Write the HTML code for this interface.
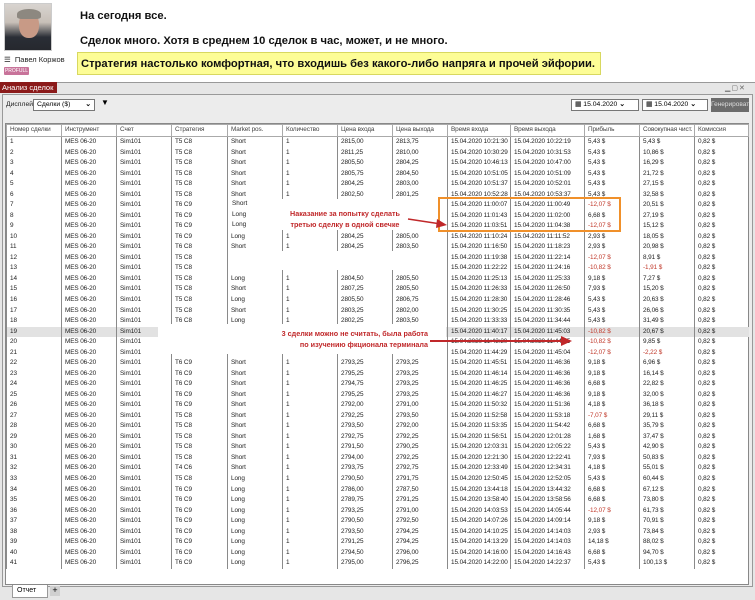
<!DOCTYPE html>
<html><head><meta charset="utf-8"><style>
*{margin:0;padding:0;box-sizing:border-box}
body{width:755px;height:600px;background:#fff;position:relative;overflow:hidden;font-family:"Liberation Sans",sans-serif}
.a{position:absolute}
.h{font-weight:bold;font-size:11.2px;color:#111;white-space:nowrap}
table{border-collapse:collapse;table-layout:fixed;position:absolute;left:6px;top:124px;width:742px;font-size:6.4px;letter-spacing:-0.1px;color:#222}
td{height:10.53px;line-height:10.53px;padding-left:3px;border-left:1px solid #8a8a8a;white-space:nowrap;overflow:hidden}
thead td{height:12px;border:1px solid #aaa;color:#444;background:#fff}
tr.g td{background:#e2e2e2}
.r{color:#c0392b}
</style></head><body>
<div class="a" style="left:4px;top:3px;width:48px;height:48px;border:1px solid #ccc;background:linear-gradient(#d8d4d0 0,#c8c0b8 40%,#2a2e36 72%,#26282e 100%)"><div class="a" style="left:14px;top:8px;width:20px;height:26px;border-radius:45%;background:#c89a86"></div><div class="a" style="left:12px;top:5px;width:24px;height:10px;border-radius:50% 50% 20% 20%;background:#8d8880"></div></div>
<div class="a" style="left:4px;top:55px;font-size:7.5px;color:#222;white-space:nowrap">&#9776;&nbsp; Павел Коржов</div>
<div class="a" style="left:4px;top:67px;width:25px;height:8px;background:#c8739a;color:#fff;font-size:5px;line-height:8px;text-align:center;border-radius:1px">PROFULL</div>
<div class="a h" style="left:80px;top:10px">На сегодня все.</div>
<div class="a h" style="left:80px;top:35px">Сделок много. Хотя в среднем 10 сделок в час, может, и не много.</div>
<div class="a" style="left:77px;top:52px;width:524px;height:23px;background:#fdfd96;border:1px solid #d8d860"></div>
<div class="a h" style="left:81px;top:58px">Стратегия настолько комфортная, что входишь без какого-либо напряга и прочей эйфории.</div>
<div class="a" style="left:0;top:82px;width:755px;height:518px;background:#e6e6e6;border-top:1px solid #999"></div>
<div class="a" style="left:0;top:82px;width:57px;height:11px;background:#8b1a1a;color:#fff;font-size:7.5px;line-height:11px;padding-left:2px">Анализ сделок</div>
<div class="a" style="left:725px;top:84px;font-size:7px;color:#666;letter-spacing:1px">▁▢✕</div>
<div class="a" style="left:2px;top:94px;width:751px;height:493px;border:1px solid #999;background:#ececec"></div>
<div class="a" style="left:6px;top:101px;font-size:6.8px;color:#222">Дисплей</div>
<div class="a" style="left:33px;top:99px;width:62px;height:12px;border:1px solid #777;background:#fff;font-size:6.8px;line-height:10px;padding-left:3px">Сделки ($)<span style="float:right;padding-right:3px;font-weight:bold">⌄</span></div>
<div class="a" style="left:101px;top:98px;font-size:8px">▼</div>
<div class="a" style="left:571px;top:99px;width:68px;height:12px;border:1px solid #777;background:#fff;font-size:6.8px;line-height:10px;padding-left:3px">▦ 15.04.2020 <b>⌄</b></div>
<div class="a" style="left:642px;top:99px;width:66px;height:12px;border:1px solid #777;background:#fff;font-size:6.8px;line-height:10px;padding-left:3px">▦ 15.04.2020 <b>⌄</b></div>
<div class="a" style="left:711px;top:98px;width:38px;height:14px;background:#6c6c6c;color:#ddd;font-size:6.5px;line-height:14px;text-align:center;white-space:nowrap;overflow:hidden">Генерировать</div>
<div class="a" style="left:5px;top:123px;width:744px;height:462px;background:#fff;border:1px solid #888"></div>
<table>
<colgroup><col style="width:55px"><col style="width:55px"><col style="width:55px"><col style="width:56px"><col style="width:55px"><col style="width:55px"><col style="width:55px"><col style="width:55px"><col style="width:63px"><col style="width:74px"><col style="width:55px"><col style="width:55px"><col style="width:54px"></colgroup>
<thead><tr><td>Номер сделки</td><td>Инструмент</td><td>Счет</td><td>Стратегия</td><td>Market pos.</td><td>Количество</td><td>Цена входа</td><td>Цена выхода</td><td>Время входа</td><td>Время выхода</td><td>Прибыль</td><td>Совокупная чист.</td><td>Комиссия</td></tr></thead>
<tbody>
<tr><td>1</td><td>MES 06-20</td><td>Sim101</td><td>T5 C8</td><td>Short</td><td>1</td><td>2815,00</td><td>2813,75</td><td>15.04.2020 10:21:30</td><td>15.04.2020 10:22:19</td><td>5,43 $</td><td>5,43 $</td><td>0,82 $</td></tr>
<tr><td>2</td><td>MES 06-20</td><td>Sim101</td><td>T5 C8</td><td>Short</td><td>1</td><td>2811,25</td><td>2810,00</td><td>15.04.2020 10:30:29</td><td>15.04.2020 10:31:53</td><td>5,43 $</td><td>10,86 $</td><td>0,82 $</td></tr>
<tr><td>3</td><td>MES 06-20</td><td>Sim101</td><td>T5 C8</td><td>Short</td><td>1</td><td>2805,50</td><td>2804,25</td><td>15.04.2020 10:46:13</td><td>15.04.2020 10:47:00</td><td>5,43 $</td><td>16,29 $</td><td>0,82 $</td></tr>
<tr><td>4</td><td>MES 06-20</td><td>Sim101</td><td>T5 C8</td><td>Short</td><td>1</td><td>2805,75</td><td>2804,50</td><td>15.04.2020 10:51:05</td><td>15.04.2020 10:51:09</td><td>5,43 $</td><td>21,72 $</td><td>0,82 $</td></tr>
<tr><td>5</td><td>MES 06-20</td><td>Sim101</td><td>T5 C8</td><td>Short</td><td>1</td><td>2804,25</td><td>2803,00</td><td>15.04.2020 10:51:37</td><td>15.04.2020 10:52:01</td><td>5,43 $</td><td>27,15 $</td><td>0,82 $</td></tr>
<tr><td>6</td><td>MES 06-20</td><td>Sim101</td><td>T5 C8</td><td>Short</td><td>1</td><td>2802,50</td><td>2801,25</td><td>15.04.2020 10:52:28</td><td>15.04.2020 10:53:37</td><td>5,43 $</td><td>32,58 $</td><td>0,82 $</td></tr>
<tr><td>7</td><td>MES 06-20</td><td>Sim101</td><td>T6 C9</td><td>Short</td><td></td><td></td><td></td><td>15.04.2020 11:00:07</td><td>15.04.2020 11:00:49</td><td class="r">-12,07 $</td><td>20,51 $</td><td>0,82 $</td></tr>
<tr><td>8</td><td>MES 06-20</td><td>Sim101</td><td>T6 C9</td><td>Long</td><td></td><td></td><td></td><td>15.04.2020 11:01:43</td><td>15.04.2020 11:02:00</td><td>6,68 $</td><td>27,19 $</td><td>0,82 $</td></tr>
<tr><td>9</td><td>MES 06-20</td><td>Sim101</td><td>T6 C9</td><td>Long</td><td></td><td></td><td></td><td>15.04.2020 11:03:51</td><td>15.04.2020 11:04:38</td><td class="r">-12,07 $</td><td>15,12 $</td><td>0,82 $</td></tr>
<tr><td>10</td><td>MES 06-20</td><td>Sim101</td><td>T6 C9</td><td>Long</td><td>1</td><td>2804,25</td><td>2805,00</td><td>15.04.2020 11:10:24</td><td>15.04.2020 11:11:52</td><td>2,93 $</td><td>18,05 $</td><td>0,82 $</td></tr>
<tr><td>11</td><td>MES 06-20</td><td>Sim101</td><td>T6 C8</td><td>Short</td><td>1</td><td>2804,25</td><td>2803,50</td><td>15.04.2020 11:16:50</td><td>15.04.2020 11:18:23</td><td>2,93 $</td><td>20,98 $</td><td>0,82 $</td></tr>
<tr><td>12</td><td>MES 06-20</td><td>Sim101</td><td>T5 C8</td><td></td><td></td><td></td><td></td><td>15.04.2020 11:19:38</td><td>15.04.2020 11:22:14</td><td class="r">-12,07 $</td><td>8,91 $</td><td>0,82 $</td></tr>
<tr><td>13</td><td>MES 06-20</td><td>Sim101</td><td>T5 C8</td><td></td><td></td><td></td><td></td><td>15.04.2020 11:22:22</td><td>15.04.2020 11:24:16</td><td class="r">-10,82 $</td><td class="r">-1,91 $</td><td>0,82 $</td></tr>
<tr><td>14</td><td>MES 06-20</td><td>Sim101</td><td>T5 C8</td><td>Long</td><td>1</td><td>2804,50</td><td>2805,50</td><td>15.04.2020 11:25:13</td><td>15.04.2020 11:25:33</td><td>9,18 $</td><td>7,27 $</td><td>0,82 $</td></tr>
<tr><td>15</td><td>MES 06-20</td><td>Sim101</td><td>T5 C8</td><td>Short</td><td>1</td><td>2807,25</td><td>2805,50</td><td>15.04.2020 11:26:33</td><td>15.04.2020 11:26:50</td><td>7,93 $</td><td>15,20 $</td><td>0,82 $</td></tr>
<tr><td>16</td><td>MES 06-20</td><td>Sim101</td><td>T5 C8</td><td>Long</td><td>1</td><td>2805,50</td><td>2806,75</td><td>15.04.2020 11:28:30</td><td>15.04.2020 11:28:46</td><td>5,43 $</td><td>20,63 $</td><td>0,82 $</td></tr>
<tr><td>17</td><td>MES 06-20</td><td>Sim101</td><td>T5 C8</td><td>Short</td><td>1</td><td>2803,25</td><td>2802,00</td><td>15.04.2020 11:30:25</td><td>15.04.2020 11:30:35</td><td>5,43 $</td><td>26,06 $</td><td>0,82 $</td></tr>
<tr><td>18</td><td>MES 06-20</td><td>Sim101</td><td>T6 C8</td><td>Long</td><td>1</td><td>2802,25</td><td>2803,50</td><td>15.04.2020 11:33:33</td><td>15.04.2020 11:34:44</td><td>5,43 $</td><td>31,49 $</td><td>0,82 $</td></tr>
<tr class="g"><td>19</td><td>MES 06-20</td><td>Sim101</td><td></td><td></td><td></td><td></td><td></td><td>15.04.2020 11:40:17</td><td>15.04.2020 11:45:03</td><td class="r">-10,82 $</td><td>20,67 $</td><td>0,82 $</td></tr>
<tr><td>20</td><td>MES 06-20</td><td>Sim101</td><td></td><td></td><td></td><td></td><td></td><td>15.04.2020 11:43:20</td><td>15.04.2020 11:44:15</td><td class="r">-10,82 $</td><td>9,85 $</td><td>0,82 $</td></tr>
<tr><td>21</td><td>MES 06-20</td><td>Sim101</td><td></td><td></td><td></td><td></td><td></td><td>15.04.2020 11:44:29</td><td>15.04.2020 11:45:04</td><td class="r">-12,07 $</td><td class="r">-2,22 $</td><td>0,82 $</td></tr>
<tr><td>22</td><td>MES 06-20</td><td>Sim101</td><td>T6 C9</td><td>Short</td><td>1</td><td>2793,25</td><td>2793,25</td><td>15.04.2020 11:45:51</td><td>15.04.2020 11:46:36</td><td>9,18 $</td><td>6,96 $</td><td>0,82 $</td></tr>
<tr><td>23</td><td>MES 06-20</td><td>Sim101</td><td>T6 C9</td><td>Short</td><td>1</td><td>2795,25</td><td>2793,25</td><td>15.04.2020 11:46:14</td><td>15.04.2020 11:46:36</td><td>9,18 $</td><td>16,14 $</td><td>0,82 $</td></tr>
<tr><td>24</td><td>MES 06-20</td><td>Sim101</td><td>T6 C9</td><td>Short</td><td>1</td><td>2794,75</td><td>2793,25</td><td>15.04.2020 11:46:25</td><td>15.04.2020 11:46:36</td><td>6,68 $</td><td>22,82 $</td><td>0,82 $</td></tr>
<tr><td>25</td><td>MES 06-20</td><td>Sim101</td><td>T6 C9</td><td>Short</td><td>1</td><td>2795,25</td><td>2793,25</td><td>15.04.2020 11:46:27</td><td>15.04.2020 11:46:36</td><td>9,18 $</td><td>32,00 $</td><td>0,82 $</td></tr>
<tr><td>26</td><td>MES 06-20</td><td>Sim101</td><td>T6 C9</td><td>Short</td><td>1</td><td>2792,00</td><td>2791,00</td><td>15.04.2020 11:50:32</td><td>15.04.2020 11:51:36</td><td>4,18 $</td><td>36,18 $</td><td>0,82 $</td></tr>
<tr><td>27</td><td>MES 06-20</td><td>Sim101</td><td>T5 C8</td><td>Short</td><td>1</td><td>2792,25</td><td>2793,50</td><td>15.04.2020 11:52:58</td><td>15.04.2020 11:53:18</td><td class="r">-7,07 $</td><td>29,11 $</td><td>0,82 $</td></tr>
<tr><td>28</td><td>MES 06-20</td><td>Sim101</td><td>T5 C8</td><td>Short</td><td>1</td><td>2793,50</td><td>2792,00</td><td>15.04.2020 11:53:35</td><td>15.04.2020 11:54:42</td><td>6,68 $</td><td>35,79 $</td><td>0,82 $</td></tr>
<tr><td>29</td><td>MES 06-20</td><td>Sim101</td><td>T5 C8</td><td>Short</td><td>1</td><td>2792,75</td><td>2792,25</td><td>15.04.2020 11:56:51</td><td>15.04.2020 12:01:28</td><td>1,68 $</td><td>37,47 $</td><td>0,82 $</td></tr>
<tr><td>30</td><td>MES 06-20</td><td>Sim101</td><td>T5 C8</td><td>Short</td><td>1</td><td>2791,50</td><td>2790,25</td><td>15.04.2020 12:03:31</td><td>15.04.2020 12:05:22</td><td>5,43 $</td><td>42,90 $</td><td>0,82 $</td></tr>
<tr><td>31</td><td>MES 06-20</td><td>Sim101</td><td>T5 C8</td><td>Short</td><td>1</td><td>2794,00</td><td>2792,25</td><td>15.04.2020 12:21:30</td><td>15.04.2020 12:22:41</td><td>7,93 $</td><td>50,83 $</td><td>0,82 $</td></tr>
<tr><td>32</td><td>MES 06-20</td><td>Sim101</td><td>T4 C6</td><td>Short</td><td>1</td><td>2793,75</td><td>2792,75</td><td>15.04.2020 12:33:49</td><td>15.04.2020 12:34:31</td><td>4,18 $</td><td>55,01 $</td><td>0,82 $</td></tr>
<tr><td>33</td><td>MES 06-20</td><td>Sim101</td><td>T5 C8</td><td>Long</td><td>1</td><td>2790,50</td><td>2791,75</td><td>15.04.2020 12:50:45</td><td>15.04.2020 12:52:05</td><td>5,43 $</td><td>60,44 $</td><td>0,82 $</td></tr>
<tr><td>34</td><td>MES 06-20</td><td>Sim101</td><td>T6 C9</td><td>Long</td><td>1</td><td>2786,00</td><td>2787,50</td><td>15.04.2020 13:44:18</td><td>15.04.2020 13:44:32</td><td>6,68 $</td><td>67,12 $</td><td>0,82 $</td></tr>
<tr><td>35</td><td>MES 06-20</td><td>Sim101</td><td>T6 C9</td><td>Long</td><td>1</td><td>2789,75</td><td>2791,25</td><td>15.04.2020 13:58:40</td><td>15.04.2020 13:58:56</td><td>6,68 $</td><td>73,80 $</td><td>0,82 $</td></tr>
<tr><td>36</td><td>MES 06-20</td><td>Sim101</td><td>T6 C9</td><td>Long</td><td>1</td><td>2793,25</td><td>2791,00</td><td>15.04.2020 14:03:53</td><td>15.04.2020 14:05:44</td><td class="r">-12,07 $</td><td>61,73 $</td><td>0,82 $</td></tr>
<tr><td>37</td><td>MES 06-20</td><td>Sim101</td><td>T6 C9</td><td>Long</td><td>1</td><td>2790,50</td><td>2792,50</td><td>15.04.2020 14:07:26</td><td>15.04.2020 14:09:14</td><td>9,18 $</td><td>70,91 $</td><td>0,82 $</td></tr>
<tr><td>38</td><td>MES 06-20</td><td>Sim101</td><td>T6 C9</td><td>Long</td><td>1</td><td>2793,50</td><td>2794,25</td><td>15.04.2020 14:10:25</td><td>15.04.2020 14:14:03</td><td>2,93 $</td><td>73,84 $</td><td>0,82 $</td></tr>
<tr><td>39</td><td>MES 06-20</td><td>Sim101</td><td>T6 C9</td><td>Long</td><td>1</td><td>2791,25</td><td>2794,25</td><td>15.04.2020 14:13:29</td><td>15.04.2020 14:14:03</td><td>14,18 $</td><td>88,02 $</td><td>0,82 $</td></tr>
<tr><td>40</td><td>MES 06-20</td><td>Sim101</td><td>T6 C9</td><td>Long</td><td>1</td><td>2794,50</td><td>2796,00</td><td>15.04.2020 14:16:00</td><td>15.04.2020 14:16:43</td><td>6,68 $</td><td>94,70 $</td><td>0,82 $</td></tr>
<tr><td>41</td><td>MES 06-20</td><td>Sim101</td><td>T6 C9</td><td>Long</td><td>1</td><td>2795,00</td><td>2796,25</td><td>15.04.2020 14:22:00</td><td>15.04.2020 14:22:37</td><td>5,43 $</td><td>100,13 $</td><td>0,82 $</td></tr>
</tbody></table>
<div class="a" style="left:229px;top:199px;width:216px;height:31px;background:#fff"></div>
<div class="a" style="left:232px;top:199px;font-size:6.4px;line-height:10.53px;color:#222">Short<br>Long<br>Long</div>
<div class="a" style="left:229px;top:251px;width:216px;height:19px;background:#fff"></div>
<div class="a" style="left:158px;top:324px;width:288px;height:30px;background:#fff"></div>
<div class="a" style="left:438px;top:197px;width:183px;height:35px;border:2px solid #f0902a"></div>
<div class="a" style="left:290px;top:208px;font-size:7.2px;font-weight:bold;color:#c0282a;text-align:center;line-height:11px;white-space:nowrap">Наказание за попытку сделать<br>третью сделку в одной свечке</div>
<svg class="a" style="left:0;top:0" width="755" height="600"><line x1="408" y1="219" x2="441" y2="224" stroke="#c0282a" stroke-width="1.5"/><polygon points="447,225 437,219 436,228" fill="#c0282a"/><line x1="430" y1="341" x2="563" y2="341" stroke="#c0282a" stroke-width="2"/><polygon points="572,341 561,336 561,346" fill="#c0282a"/></svg>
<div class="a" style="left:260px;top:328px;width:168px;font-size:7.2px;font-weight:bold;color:#c0282a;text-align:right;line-height:11px;white-space:nowrap">3 сделки можно не считать, была работа<br>по изучению фкционала терминала</div>
<div class="a" style="left:12px;top:585px;width:36px;height:13px;background:#fff;border:1px solid #999;border-top:none;font-size:7px;line-height:12px;padding-left:4px">Отчет</div>
<div class="a" style="left:50px;top:586px;width:10px;height:10px;background:#d0d0d0;font-size:9px;line-height:9px;text-align:center">+</div>
</body></html>
